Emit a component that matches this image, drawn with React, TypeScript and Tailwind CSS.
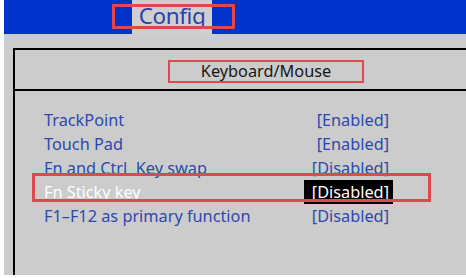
const items = [
  { label: 'TrackPoint', value: '[Enabled]' },
  { label: 'Touch Pad', value: '[Enabled]' },
  { label: 'Fn and Ctrl  Key swap', value: '[Disabled]' },
  { label: 'Fn Sticky key', value: '[Disabled]', selected: true },
  { label: 'F1–F12 as primary function', value: '[Disabled]' },
]

export default function App() {
  return (
    <div
      className="w-[466px] h-[278px] bg-white pl-[4px] pb-[3px] flex flex-col overflow-hidden"
      style={{ fontFamily: '"Noto Sans", "Open Sans", sans-serif' }}
    >
      {/* top menu bar */}
      <header className="relative h-[34px] shrink-0 bg-[#0033cc] flex">
        <div className="ml-[128px] w-[80px] bg-[#cfcfcf] text-[#2b44a8] text-[22.5px] tracking-[-0.4px] leading-none flex items-center justify-center pb-[1px]">
          Config
        </div>
        <div className="absolute left-[108px] top-[4px] w-[123px] h-[25px] border-[3px] border-[#e0484d]" />
      </header>

      <main className="flex-1 bg-[#cccccc] pt-[14px] pl-[9px]">
        <section className="h-full border-l-2 border-t-2 border-black">
          <div className="h-[41px] border-b-2 border-black pl-[153px] pt-[10px]">
            <div className="w-[196px] h-[23px] border-2 border-[#e0484d] flex items-center justify-center text-[16.3px] text-[#161616] leading-none">
              Keyboard/Mouse
            </div>
          </div>

          <ul className="pt-[17px] pr-[73px] text-[16.3px] leading-[24px]">
            {items.map((item) => (
              <li key={item.label} className="relative h-[24px] flex items-center justify-between pl-[29px]">
                <span className={`whitespace-pre ${item.selected ? 'text-white' : 'text-[#2c48ad]'}`}>{item.label}</span>
                <span
                  className={`h-[24px] pl-[8px] pr-[4px] ${item.selected ? 'bg-black text-white' : 'text-[#2c48ad]'}`}
                >
                  {item.value}
                </span>
                {item.selected && (
                  <div className="absolute left-[17px] -top-[7px] w-[399px] h-[29px] border-[3px] border-[#e0484d]" />
                )}
              </li>
            ))}
          </ul>
        </section>
      </main>
    </div>
  )
}
